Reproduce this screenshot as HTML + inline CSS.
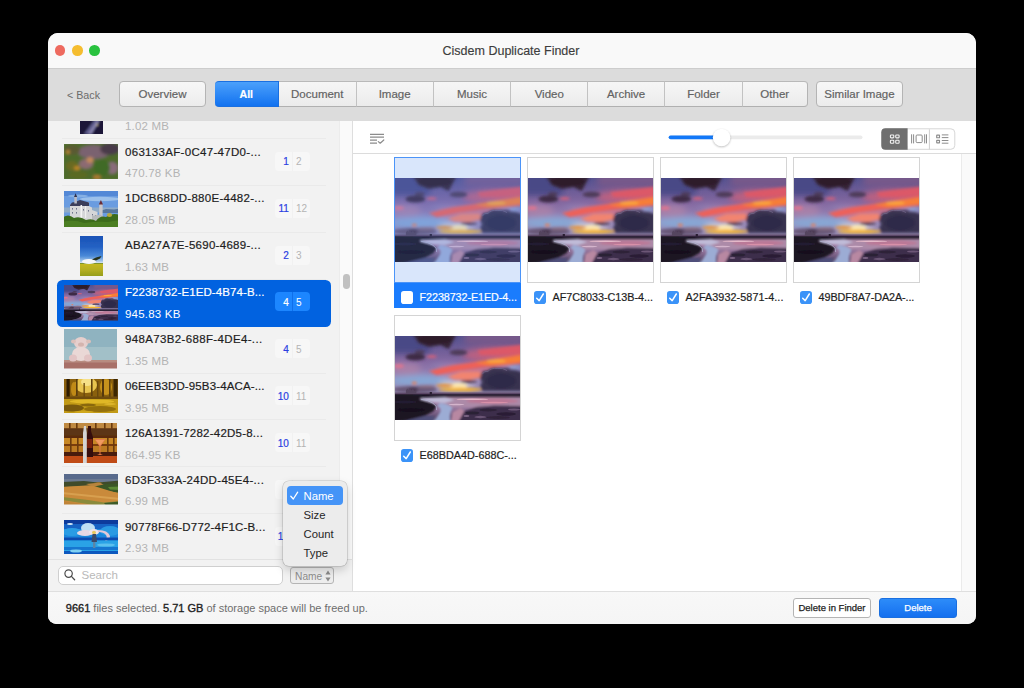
<!DOCTYPE html>
<html>
<head>
<meta charset="utf-8">
<title>Cisdem Duplicate Finder</title>
<style>
*{box-sizing:border-box;margin:0;padding:0}
html,body{width:1024px;height:688px;background:#000;overflow:hidden}
body{font-family:"Liberation Sans",sans-serif;font-size:11px;color:#222;position:relative}
.win{position:absolute;left:48px;top:33px;width:928px;height:590.7px;border-radius:10px 10px 8.5px 8.5px;background:#fff;overflow:hidden}
.abs{position:absolute}
/* title bar */
.tbar{position:absolute;left:0;top:0;width:928px;height:35.6px;background:#f9f9f9;border-bottom:1px solid #cdcdcd}
.tl{position:absolute;top:12.1px;width:10.6px;height:10.6px;border-radius:50%}
.title{-webkit-text-stroke:0.15px;position:absolute;left:0;width:926px;top:11.2px;text-align:center;font-size:12.5px;color:#3d3d3d;line-height:14px}
/* toolbar */
.tool{position:absolute;left:0;top:35.6px;width:928px;height:52.4px;background:#dcdcdc}
.btn{-webkit-text-stroke:0.18px;position:absolute;top:12.6px;height:26px;border:1px solid #b4b4b4;border-radius:4px;background:linear-gradient(#f7f7f7,#ececec);color:#626262;font-size:11.5px;text-align:center;line-height:24px}
.seg{-webkit-text-stroke:0.18px;position:absolute;top:12.6px;height:26px;border-top:1px solid #b9b9b9;border-bottom:1px solid #b0b0b0;border-right:1px solid #c2c2c2;background:linear-gradient(#f6f6f6,#ebebeb);color:#626262;font-size:11.5px;text-align:center;line-height:24px}
/* sidebar */
.side{position:absolute;left:0;top:88px;width:292px;height:470px;background:#f2f2f2;overflow:hidden}
.strack{position:absolute;left:291.4px;top:88px;width:13.6px;height:470px;background:#fafafa;border-left:1px solid #ececec;border-right:1px solid #dedede}
.row{position:absolute;left:0;width:292px;height:47px}
.row .sep{position:absolute;left:14px;width:264px;bottom:-0.6px;height:1px;background:#eaeaea}
.row .nm{position:absolute;left:77px;top:7px;font-size:11.5px;color:#1e1e1e;white-space:nowrap;letter-spacing:0.3px;-webkit-text-stroke:0.2px}
.row .sz{position:absolute;left:77px;top:28.8px;font-size:11.5px;color:#b4b4b4;white-space:nowrap;letter-spacing:0.2px}
.row .th{position:absolute;left:16px;width:54px}
.bdg{position:absolute;left:227.3px;top:13.3px;width:34.8px;height:19px;border-radius:4px;background:#f7f7f7;font-size:10px}
.bdg i{position:absolute;left:16.7px;top:0;width:1px;height:19px;background:#f1f1f1}
.bdg b{position:absolute;left:0;width:13.6px;top:4.6px;text-align:right;color:#2b3fe2;font-weight:normal;font-style:normal;-webkit-text-stroke:0.2px}
.bdg s{position:absolute;left:20.7px;width:14px;top:4.6px;text-align:left;color:#b4b4b4;text-decoration:none}
.row.sel{left:9px;width:274px;background:#0162e0;border-radius:5.5px;margin-top:0.5px}
.row.sel .nm,.row.sel .sz{color:#fff;left:68px;margin-top:-0.6px}
.row.sel .bdg{margin-top:-0.6px}
.row.sel .th{left:7px}
.row.sel .bdg{left:218.3px;background:#1c86ff}
.row.sel .bdg i{background:#0f6fea}
.row.sel .bdg b,.row.sel .bdg s{color:#fff}
/* bottom of sidebar */
.sbot{position:absolute;left:0;top:526px;width:305px;height:32px;background:#f2f2f2;border-top:1px solid #e2e2e2;border-right:1px solid #dedede}
.search{position:absolute;left:9.5px;top:6px;width:225px;height:19px;border:1px solid #cfcfcf;border-radius:5px;background:#fff;color:#b9b9b9;font-size:11.5px;line-height:16px;padding-left:23px}
.pop{position:absolute;left:241.9px;top:6.6px;width:44px;height:17px;border:1px solid #b5b5b5;border-radius:3px;background:#ededed;color:#8c8c8c;font-size:10.2px;line-height:17.5px;padding-left:4.2px}
/* status */
.status{position:absolute;left:0;top:558px;width:928px;height:33px;background:linear-gradient(#f8f8f8,#f5f5f5);border-top:1px solid #dfdfdf}
.status .txt{position:absolute;left:17.8px;top:10.2px;font-size:11px;color:#6e6e6e;white-space:nowrap}
.status .txt b{color:#1e1e1e;font-weight:normal;-webkit-text-stroke:0.35px #1e1e1e}
/* content */
.chead{position:absolute;left:305px;top:88px;width:623px;height:33px;background:#fff;border-bottom:1px solid #dcdcdc}
.cont{position:absolute;left:305px;top:121px;width:609px;height:437px;background:#fff}
.ctrack{position:absolute;left:913px;top:121px;width:15px;height:437px;background:#fafafa;border-left:1px solid #ebebeb}
.tile{position:absolute;width:127px;height:126px;border:1px solid #d4d4d4;background:#fff}
.tile svg{position:absolute;left:0;top:20px;width:125px;height:84px}
.lbl{position:absolute;width:127px;height:25px;font-size:10.8px;color:#1e1e1e;white-space:nowrap;-webkit-text-stroke:0.2px}
.lbl span{position:absolute;left:25.6px;top:8.6px;line-height:12px}
.cb{position:absolute;left:7px;top:8.6px;width:12px;height:12.8px;border-radius:2.8px;background:#3b93f8}
.tile.tsel{background:#d9e6fb;border-color:#4b94f8}
.lbl.lsel{background:#1a7cfd;color:#fff}
.cb.off{background:#fff}
.menu{position:absolute;left:235.1px;top:448px;width:64.2px;height:85px;border-radius:6px;background:#ececec;box-shadow:0 0 0 0.6px rgba(0,0,0,.18),0 4px 10px rgba(0,0,0,.18);font-size:11.3px;color:#262626}
.menu div{position:absolute;left:20.4px;line-height:13px}
</style>
</head>
<body>
<svg width="0" height="0" style="position:absolute;left:0;top:0">
<defs>
<linearGradient id="sky" x1="0" y1="0" x2="0" y2="1">
<stop offset="0" stop-color="#54508e"/><stop offset="0.3" stop-color="#8468a0"/><stop offset="0.52" stop-color="#9c8cbc"/><stop offset="0.68" stop-color="#9084ac"/><stop offset="0.7" stop-color="#261c30"/><stop offset="0.735" stop-color="#261c30"/><stop offset="0.75" stop-color="#ac86ac"/><stop offset="0.88" stop-color="#8e7098"/><stop offset="1" stop-color="#4e3e5e"/>
</linearGradient>
<filter id="bl" x="-20%" y="-20%" width="140%" height="140%"><feGaussianBlur stdDeviation="3"/></filter>
<filter id="bm" x="-20%" y="-20%" width="140%" height="140%"><feGaussianBlur stdDeviation="1.7"/></filter>
<filter id="bt" x="-20%" y="-20%" width="140%" height="140%"><feGaussianBlur stdDeviation="0.45"/></filter>
<filter id="bs" x="-20%" y="-20%" width="140%" height="140%"><feGaussianBlur stdDeviation="0.9"/></filter>
<clipPath id="cp"><rect width="126" height="84"/></clipPath>
<g id="sun" clip-path="url(#cp)">
<rect width="126" height="84" fill="url(#sky)"/>
<g filter="url(#bl)">
<rect x="-5" y="-5" width="40" height="22" fill="#4a4a86"/>
<rect x="70" y="-5" width="60" height="14" fill="#77588a"/>
<ellipse cx="10" cy="33" rx="16" ry="6" fill="#a880a8"/>
<ellipse cx="26" cy="44.5" rx="32" ry="5.5" fill="#86a8d6"/>
<ellipse cx="50" cy="30" rx="14" ry="3" fill="#8a7eb4"/>
<ellipse cx="120" cy="31" rx="8" ry="3" fill="#88aede"/>
<ellipse cx="108" cy="28" rx="10" ry="2" fill="#c29ac2"/>
<ellipse cx="62" cy="49" rx="18" ry="4" fill="#d6cfd8"/>
<ellipse cx="100" cy="19" rx="32" ry="7" fill="#bc6080"/>
<ellipse cx="72" cy="35" rx="30" ry="5" fill="#cc7690"/>
</g>
<g filter="url(#bm)">
<path d="M18 -2H62L58 6L54 13L46 9L34 11L24 7Z" fill="#362434"/>
<ellipse cx="40" cy="3.5" rx="17" ry="5" fill="#2e1e2c"/>
<ellipse cx="20.5" cy="21" rx="10" ry="3.6" fill="#3e2a44"/>
<ellipse cx="25" cy="16" rx="5" ry="2" fill="#4c3a58"/>
<ellipse cx="64" cy="16.5" rx="9" ry="2.8" fill="#4e3a58"/>
<path d="M83 14.5 L100 12 L128 8.5 L128 18 L104 19.5 L86 19Z" fill="#dc5868"/>
<path d="M34 35 L58 29.5 L80 26 L128 18 L128 27.5 L92 31 L64 34.5 L42 39Z" fill="#ee6058"/>
<path d="M80 26.5 L128 19 L128 26 L96 29.5Z" fill="#f67e38"/>
<ellipse cx="102" cy="25" rx="10" ry="1.3" fill="#fbb040"/>
<ellipse cx="37" cy="20.5" rx="5" ry="1.6" fill="#d0607c"/>
<path d="M53 40.5 L66 36 L85 35.5 L88 41 L74 44 L60 43.5Z" fill="#f28470"/>
<ellipse cx="19.5" cy="47" rx="2.6" ry="1.2" fill="#ee7a50"/>
<ellipse cx="4" cy="30" rx="5" ry="2" fill="#dc7490"/>
<ellipse cx="64" cy="50" rx="9" ry="3" fill="#fbe6b0"/>
<ellipse cx="50" cy="49.5" rx="9" ry="1.4" fill="#ea922e"/>
<ellipse cx="66" cy="53.4" rx="22" ry="1.8" fill="#f4b42e"/>
<ellipse cx="20" cy="53.5" rx="22" ry="3.4" fill="#685676"/>
<ellipse cx="32" cy="50.5" rx="9" ry="1.3" fill="#8c7084"/>
<path d="M87 38 Q89 33 93 35 Q97 30 104 32 Q110 31 114 34 Q120 33 128 36 L128 55 L88 55 Q84 50 88 46 Q84 42 87 38Z" fill="#37314f"/>
<ellipse cx="107" cy="45" rx="15" ry="8" fill="#2f2a48"/>
<ellipse cx="74.5" cy="45.5" rx="8.5" ry="1.5" fill="#48344e"/>
<ellipse cx="112" cy="33" rx="4" ry="1.6" fill="#4e4060"/>
<ellipse cx="18" cy="54" rx="5" ry="2.5" fill="#46364e"/>
</g>
<rect x="0" y="56.2" width="126" height="2" fill="#6a5672" opacity="0.55"/>
<g filter="url(#bs)">
<rect x="-2" y="58.4" width="130" height="2.2" fill="#20182a"/>
<rect x="50" y="61.3" width="80" height="10" fill="#ac8aa8"/>
<ellipse cx="98" cy="65" rx="26" ry="2.6" fill="#bc7896"/>
<path d="M22 62.5 L50 61.3 L60 64 L50 67 L36 66Z" fill="#c0bcd8"/>
<path d="M-2 59 L34 59.6 L24 63 L36 66.5 L42 70 L39 75 L30 80 L14 84 L-2 86Z" fill="#1b1424"/>
<path d="M42 69.5 Q48 72 45 77 Q42 82 38 86 L56 86 Q54 78 58 72 Q54 68 46 67Z" fill="#9cacd4"/>
<path d="M56 86 L58 76 L66 72 L70 75 L64 86Z" fill="#b888a2"/>
<path d="M64 86 L70 75 L82 71 L100 69.5 L128 70 L128 86Z" fill="#3e2f4c"/>
<path d="M30 80 L14 84 L10 86 L38 86 L40 80Z" fill="#50507a"/>
</g>
<g filter="url(#bt)">
<path d="M11 58V54.5L12.5 52.5L14 54.5L15 52L16.5 54.5L18 52.8L19.5 55L21.5 54.5V58Z" fill="#54445e"/>
<rect x="35" y="56" width="2.2" height="2.4" fill="#2a1e32"/>
<ellipse cx="78" cy="77" rx="7" ry="1.6" fill="#2c2036"/><ellipse cx="94" cy="74" rx="9" ry="1.4" fill="#2e2238"/><ellipse cx="112" cy="78" rx="10" ry="1.8" fill="#2a1e34"/><ellipse cx="104" cy="81.5" rx="12" ry="1.4" fill="#30243a"/><ellipse cx="86" cy="81" rx="6" ry="1.2" fill="#6a5474"/><ellipse cx="120" cy="73.5" rx="6" ry="1" fill="#6c5676"/><ellipse cx="72" cy="80" rx="3" ry="1" fill="#7c6484"/>
<ellipse cx="78" cy="63.2" rx="16" ry="0.7" fill="#e4b8c8"/><ellipse cx="100" cy="66.5" rx="14" ry="0.7" fill="#d890a8"/><ellipse cx="62" cy="68.5" rx="8" ry="0.7" fill="#d4b4cc"/>
<ellipse cx="10" cy="66" rx="12" ry="1.5" fill="#241a30"/><ellipse cx="16" cy="74" rx="14" ry="2" fill="#15101e"/>
<path d="M26 63.2Q34 64.2 38 67Q43 70 42 74" stroke="#b4b8d4" stroke-width="0.9" fill="none" opacity="0.8"/>
<path d="M88 38Q90 34.5 93.5 35.5Q97 31.5 103 32.5Q109 31.5 113 34.5" stroke="#6e6284" stroke-width="0.9" fill="none"/>

</g>
</g>
</defs>
</svg>
<div class="win">
  <div class="tbar">
    <div class="tl" style="left:6.6px;background:#ee6a5f"></div>
    <div class="tl" style="left:24px;background:#f5bd2f"></div>
    <div class="tl" style="left:41.4px;background:#29c23f"></div>
    <div class="title">Cisdem Duplicate Finder</div>
  </div>
  <div class="tool">
    <div class="abs" style="left:19px;top:20.8px;font-size:10.7px;color:#6b6b6b">&lt; Back</div>
    <div class="btn" style="left:71px;width:87px">Overview</div>
    <div class="seg" style="left:166.6px;width:64.4px;border-radius:4px 0 0 4px;background:linear-gradient(#4ba0fb,#1272f0);border-color:#1a6fe0;color:#fff;font-weight:bold;font-size:10.6px">All</div>
    <div class="seg" style="left:231.0px;width:77.5px">Document</div>
    <div class="seg" style="left:308.5px;width:77.3px">Image</div>
    <div class="seg" style="left:385.8px;width:77.5px">Music</div>
    <div class="seg" style="left:463.3px;width:76.9px">Video</div>
    <div class="seg" style="left:540.2px;width:76.8px">Archive</div>
    <div class="seg" style="left:617.0px;width:78.0px">Folder</div>
    <div class="seg" style="left:695.0px;width:64.5px;border-radius:0 4px 4px 0;border-right:1px solid #b4b4b4">Other</div>
    <div class="btn" style="left:768px;width:87px">Similar Image</div>
  </div>
  <div class="side"><div class="row" style="top:-29.3px;height:46.9px"><svg class="th" style="left:31.7px;top:2.6px;width:23px;height:40px" viewBox="0 0 23 40" preserveAspectRatio="none"><defs><filter id="fnight" x="-10%" y="-10%" width="120%" height="120%"><feGaussianBlur stdDeviation="0.8"/></filter><clipPath id="cnight"><rect width="23" height="40"/></clipPath></defs><g clip-path="url(#cnight)"><g filter="url(#fnight)"><rect x="-2" y="-2" width="27" height="44" fill="#1b1937"/><path d="M4 40L16 24L21 24L12 40Z" fill="#5d5c8c"/><path d="M8 40L17 27L19 27L11 40Z" fill="#8a86b0"/><circle cx="17" cy="31" r="1" fill="#c8b890"/></g></g></svg><div class="nm" style="letter-spacing:0.00px"></div><div class="sz" style="margin-top:-0.8px">1.02 MB</div><div class="sep"></div></div>
<div class="row" style="top:17.6px;height:46.9px"><svg class="th" style="left:16.2px;top:5.6px;width:54px;height:35px" viewBox="0 0 54 35" preserveAspectRatio="none"><defs><filter id="fflower" x="-10%" y="-10%" width="120%" height="120%"><feGaussianBlur stdDeviation="1.6"/></filter><clipPath id="cflower"><rect width="54" height="35"/></clipPath></defs><g clip-path="url(#cflower)"><g filter="url(#fflower)"><rect x="-2" y="-2" width="58" height="39" fill="#4d6a2c"/><ellipse cx="30" cy="8" rx="16" ry="7" fill="#7a6270"/><ellipse cx="46" cy="5" rx="10" ry="6" fill="#4a3a48"/><ellipse cx="8" cy="6" rx="8" ry="5" fill="#5a5a30"/><ellipse cx="22" cy="20" rx="7" ry="5" fill="#8c6a72"/><ellipse cx="48" cy="24" rx="6" ry="6" fill="#8a6c7c"/><ellipse cx="26" cy="16" rx="3.5" ry="3" fill="#c48a5c"/><ellipse cx="8" cy="22" rx="6" ry="5" fill="#6a6a20"/><ellipse cx="13" cy="24" rx="3" ry="2" fill="#c28828"/><ellipse cx="4" cy="8" rx="2" ry="2" fill="#c08a30"/><ellipse cx="38" cy="24" rx="8" ry="8" fill="#3f6a26"/><ellipse cx="14" cy="31" rx="10" ry="4" fill="#5a6a22"/><ellipse cx="33" cy="33" rx="4" ry="2" fill="#b07a30"/></g></g></svg><div class="nm" style="letter-spacing:0.31px">063133AF-0C47-47D0-...</div><div class="sz">470.78 KB</div><div class="bdg"><i></i><b>1</b><s>2</s></div><div class="sep"></div></div>
<div class="row" style="top:64.4px;height:46.9px"><svg class="th" style="left:16.2px;top:5.6px;width:54px;height:36px" viewBox="0 0 54 36" preserveAspectRatio="none"><defs><filter id="fcastle" x="-10%" y="-10%" width="120%" height="120%"><feGaussianBlur stdDeviation="0.45"/></filter><clipPath id="ccastle"><rect width="54" height="36"/></clipPath></defs><g clip-path="url(#ccastle)"><g filter="url(#fcastle)"><rect x="-2" y="-2" width="58" height="40" fill="#6a9ce0"/><rect x="-2" y="-2" width="58" height="7" fill="#5288d6"/><ellipse cx="36" cy="8" rx="20" ry="2.2" fill="#9cc0ea"/><ellipse cx="14" cy="5" rx="10" ry="1.5" fill="#86b0e4"/><rect x="-2" y="16.5" width="58" height="5" fill="#90acc8"/><path d="M36 20L42 18L50 18.5L56 17.5V22H36Z" fill="#56769e"/><path d="M6 33V13.5H11V11H25V15L28 16.5V19L33.5 21V33Z" fill="#d6d6d8"/><path d="M6 14L8 11.5L11 11L16 9L25 11.5V15H6Z" fill="#3a3c5a"/><rect x="10.3" y="5.5" width="2.6" height="7" fill="#b8bac4"/><path d="M10 6L11.6 2.2L13.2 6Z" fill="#2f3150"/><rect x="16.5" y="14" width="1.6" height="14" fill="#f4f4f4"/><rect x="21" y="15" width="1.2" height="12" fill="#efefef"/><g fill="#70748c"><rect x="8" y="17" width="1" height="1.6"/><rect x="12" y="17" width="1" height="1.6"/><rect x="8" y="21" width="1" height="1.6"/><rect x="12" y="21" width="1" height="1.6"/><rect x="19" y="18" width="1" height="1.6"/><rect x="24" y="19" width="1" height="1.6"/><rect x="28" y="23" width="1" height="1.4"/><rect x="31" y="24" width="1" height="1.4"/></g><rect x="35.2" y="13" width="3.4" height="16" fill="#c8c8cc"/><path d="M34.8 13.4L36.9 9L39 13.4Z" fill="#6a2c34"/><path d="M28 25L36 23.5L40 26V34H28Z" fill="#b8babc"/><path d="M-2 27Q4 22 10 27Q16 25 22 29Q28 27 32 30Q36 24 42 26Q48 21 56 24V38H-2Z" fill="#3d6c1c"/><path d="M-2 31Q10 28 20 32Q34 30 44 31L56 29V38H-2Z" fill="#4c7e22"/><ellipse cx="45.5" cy="24" rx="2.6" ry="2" fill="#b8a83c"/></g></g></svg><div class="nm" style="letter-spacing:0.28px">1DCB68DD-880E-4482-...</div><div class="sz">28.05 MB</div><div class="bdg"><i></i><b>11</b><s>12</s></div><div class="sep"></div></div>
<div class="row" style="top:111.3px;height:46.9px"><svg class="th" style="left:31.7px;top:3.3px;width:23px;height:40px" viewBox="0 0 23 40" preserveAspectRatio="none"><defs><filter id="frape" x="-10%" y="-10%" width="120%" height="120%"><feGaussianBlur stdDeviation="0.5"/></filter><clipPath id="crape"><rect width="23" height="40"/></clipPath></defs><g clip-path="url(#crape)"><g filter="url(#frape)"><defs><linearGradient id="rg" x1="0" y1="0" x2="0" y2="1"><stop offset="0" stop-color="#184fb4"/><stop offset="0.3" stop-color="#2462c4"/><stop offset="0.5" stop-color="#4a8ad8"/><stop offset="0.62" stop-color="#a8c8ea"/><stop offset="0.66" stop-color="#dfe8f2"/><stop offset="0.665" stop-color="#6a8a30"/><stop offset="0.69" stop-color="#c4b824"/><stop offset="0.82" stop-color="#b4ae20"/><stop offset="1" stop-color="#8c981c"/></linearGradient></defs><rect x="-2" y="-2" width="27" height="44" fill="url(#rg)"/><ellipse cx="9" cy="25.5" rx="7" ry="2.5" fill="#f4f6f8"/><path d="M12 23.5L16 21.5L21.5 20L20 22.5L16 24.5Z" fill="#26301c"/></g></g></svg><div class="nm" style="letter-spacing:0.28px">ABA27A7E-5690-4689-...</div><div class="sz">1.63 MB</div><div class="bdg"><i></i><b>2</b><s>3</s></div><div class="sep"></div></div>
<div class="row sel" style="top:158.2px;height:46.9px"><svg class="th" style="left:7.2px;top:5.8px;width:54px;height:35.5px" viewBox="0 0 126 84" preserveAspectRatio="none"><use href="#sun"/></svg><div class="nm" style="letter-spacing:0.09px">F2238732-E1ED-4B74-B...</div><div class="sz">945.83 KB</div><div class="bdg"><i></i><b>4</b><s>5</s></div></div>
<div class="row" style="top:205.1px;height:46.9px"><svg class="th" style="left:16.2px;top:3.3px;width:53px;height:39.5px" viewBox="0 0 53 39.5" preserveAspectRatio="none"><defs><filter id="fteddy" x="-10%" y="-10%" width="120%" height="120%"><feGaussianBlur stdDeviation="0.6"/></filter><clipPath id="cteddy"><rect width="53" height="39.5"/></clipPath></defs><g clip-path="url(#cteddy)"><g filter="url(#fteddy)"><rect x="-2" y="-2" width="58" height="44" fill="#8fb3c0"/><rect x="-2" y="18" width="58" height="14" fill="#a2c0c8"/><rect x="-2" y="31" width="58" height="3" fill="#b88c80"/><rect x="-2" y="33.5" width="58" height="8" fill="#a87068"/><ellipse cx="17" cy="14" rx="7" ry="6" fill="#e6cfcd"/><ellipse cx="17" cy="25" rx="9" ry="7" fill="#ead8d6"/><ellipse cx="9" cy="29" rx="4" ry="3.6" fill="#e2c4c4"/><ellipse cx="24" cy="29" rx="4" ry="3.6" fill="#e2c4c4"/><ellipse cx="9.5" cy="12.5" rx="2.5" ry="2" fill="#dcc0ba"/><ellipse cx="24.5" cy="12.5" rx="2.5" ry="2" fill="#dcc0ba"/><ellipse cx="17" cy="15.5" rx="3" ry="2" fill="#d4b4ae"/></g></g></svg><div class="nm" style="letter-spacing:0.35px">948A73B2-688F-4DE4-...</div><div class="sz">1.35 MB</div><div class="bdg"><i></i><b>4</b><s>5</s></div><div class="sep"></div></div>
<div class="row" style="top:251.9px;height:46.9px"><svg class="th" style="left:16.2px;top:5.7px;width:54px;height:34px" viewBox="0 0 54 34" preserveAspectRatio="none"><defs><filter id="fforest" x="-10%" y="-10%" width="120%" height="120%"><feGaussianBlur stdDeviation="0.7"/></filter><clipPath id="cforest"><rect width="54" height="34"/></clipPath></defs><g clip-path="url(#cforest)"><g filter="url(#fforest)"><rect x="-2" y="-2" width="58" height="38" fill="#a87a10"/><rect x="-2" y="-2" width="58" height="21" fill="#8a600c"/><ellipse cx="22" cy="6" rx="11" ry="8" fill="#e8c450"/><ellipse cx="23" cy="3" rx="6" ry="4" fill="#f6e088"/><ellipse cx="42" cy="8" rx="6" ry="8" fill="#c8921a"/><ellipse cx="10" cy="10" rx="3" ry="7" fill="#c08a18"/><rect x="2.5" y="-2" width="3.2" height="22" fill="#2e1c04"/><rect x="12" y="-2" width="1.6" height="19" fill="#5a3c08"/><rect x="19.5" y="4" width="1.3" height="14" fill="#6a480a"/><rect x="27" y="-2" width="1.6" height="19" fill="#5e4008"/><rect x="33" y="2" width="1.4" height="16" fill="#6a480a"/><rect x="38" y="-2" width="2" height="20" fill="#553808"/><rect x="45" y="-2" width="1.6" height="20" fill="#5e4008"/><rect x="49.5" y="-2" width="4" height="21" fill="#3a2606"/><rect x="-2" y="17.5" width="58" height="3" fill="#6e4c08"/><rect x="-2" y="20" width="58" height="16" fill="#c29a16"/><ellipse cx="28" cy="22.5" rx="22" ry="2" fill="#e0b828"/><ellipse cx="8" cy="29" rx="12" ry="3.5" fill="#7a5a0a"/><ellipse cx="36" cy="30" rx="16" ry="3" fill="#94700e"/><ellipse cx="24" cy="26" rx="8" ry="1.4" fill="#8a680c"/><ellipse cx="46" cy="25" rx="6" ry="1.2" fill="#dcb42a"/><ellipse cx="20" cy="33" rx="10" ry="1.2" fill="#d0a81e"/></g></g></svg><div class="nm" style="letter-spacing:0.13px">06EEB3DD-95B3-4ACA-...</div><div class="sz">3.95 MB</div><div class="bdg"><i></i><b>10</b><s>11</s></div><div class="sep"></div></div>
<div class="row" style="top:298.8px;height:46.9px"><svg class="th" style="left:16.2px;top:3.5px;width:53px;height:40px" viewBox="0 0 53 40" preserveAspectRatio="none"><defs><filter id="fbar" x="-10%" y="-10%" width="120%" height="120%"><feGaussianBlur stdDeviation="0.7"/></filter><clipPath id="cbar"><rect width="53" height="40"/></clipPath></defs><g clip-path="url(#cbar)"><g filter="url(#fbar)"><rect x="-2" y="-2" width="58" height="44" fill="#5a2c0c"/><rect x="-2" y="-2" width="58" height="7.5" fill="#c08a42"/><rect x="-2" y="5.5" width="58" height="7" fill="#5c3412"/><rect x="-2" y="15" width="58" height="6" fill="#c88828"/><rect x="-2" y="21" width="58" height="3" fill="#7a3c10"/><rect x="-2" y="23" width="58" height="6" fill="#bc7a24"/><rect x="-2" y="29" width="58" height="4.5" fill="#481a08"/><rect x="-2" y="33" width="58" height="9" fill="#c04c14"/><g fill="#6a3a10"><rect x="5" y="-2" width="1.6" height="8"/><rect x="12" y="-2" width="1.6" height="8"/><rect x="31" y="-2" width="1.6" height="8"/><rect x="40" y="-2" width="1.6" height="8"/><rect x="47" y="-2" width="1.6" height="8"/><rect x="6" y="15" width="1.6" height="14"/><rect x="13" y="15" width="1.6" height="14"/><rect x="43" y="15" width="1.6" height="14"/><rect x="49" y="15" width="1.6" height="14"/></g><path d="M22.5 34V14L24 8V3H27V8L29 14V34Z" fill="#34100a"/><rect x="23" y="16" width="5.5" height="9" fill="#7a2410"/><path d="M19 40V10L20 3H22L22.8 10V40Z" fill="#d4d4d4"/><path d="M30.5 16H41.5L36.5 23.5V31L39 32H33L35.5 31V23.5Z" fill="#e07848"/><path d="M31.5 17H40.5L36 22.5Z" fill="#f09a60"/></g></g></svg><div class="nm" style="letter-spacing:0.22px">126A1391-7282-42D5-8...</div><div class="sz">864.95 KB</div><div class="bdg"><i></i><b>10</b><s>11</s></div><div class="sep"></div></div>
<div class="row" style="top:345.7px;height:46.9px"><svg class="th" style="left:16.2px;top:7.5px;width:54px;height:30.5px" viewBox="0 0 54 30.5" preserveAspectRatio="none"><defs><filter id="ffield" x="-10%" y="-10%" width="120%" height="120%"><feGaussianBlur stdDeviation="0.6"/></filter><clipPath id="cfield"><rect width="54" height="30.5"/></clipPath></defs><g clip-path="url(#cfield)"><g filter="url(#ffield)"><rect x="-2" y="-2" width="58" height="36" fill="#c98c3c"/><rect x="-2" y="-2" width="58" height="9.6" fill="#596a8c"/><rect x="-2" y="5" width="58" height="3" fill="#6c7a92"/><path d="M-2 8L20 7L34 8.5L56 6.5V12L30 11L-2 13Z" fill="#3f4c2c"/><path d="M22 10L36 8.5L40 11L30 13Z" fill="#b8843c"/><path d="M28 13L42 10L56 9.5V19L44 17Z" fill="#3a5628"/><path d="M44 13L56 12.5V16L46 15.5Z" fill="#5c8a34"/><path d="M-2 13L30 12L56 20V34H-2Z" fill="#c98a3a"/><path d="M-2 18L56 24V26L-2 20Z" fill="#d8a050"/><path d="M-2 23L24 26L40 28.5L56 27V34L30 31L-2 26Z" fill="#8a8a3a"/><path d="M-2 27L30 31.5L56 34H-2Z" fill="#c08438"/><path d="M40 29L56 27.5V34H44Z" fill="#3c5a28"/></g></g></svg><div class="nm" style="letter-spacing:0.31px">6D3F333A-24DD-45E4-...</div><div class="sz">6.99 MB</div><div class="bdg"><i></i><b>4</b><s>5</s></div><div class="sep"></div></div>
<div class="row" style="top:392.5px;height:46.9px"><svg class="th" style="left:16.2px;top:6.1px;width:54px;height:34px" viewBox="0 0 54 34" preserveAspectRatio="none"><defs><filter id="fanime" x="-10%" y="-10%" width="120%" height="120%"><feGaussianBlur stdDeviation="0.6"/></filter><clipPath id="canime"><rect width="54" height="34"/></clipPath></defs><g clip-path="url(#canime)"><g filter="url(#fanime)"><rect x="-2" y="-2" width="58" height="38" fill="#1a86dc"/><rect x="-2" y="-2" width="58" height="7" fill="#0c3a9c"/><rect x="-2" y="4" width="58" height="5" fill="#1462c4"/><ellipse cx="8" cy="12" rx="10" ry="4" fill="#2c9ce4"/><ellipse cx="46" cy="11" rx="10" ry="5" fill="#2a9ae2"/><ellipse cx="24" cy="8" rx="7" ry="5" fill="#bfe0f4"/><ellipse cx="21" cy="13" rx="8" ry="3" fill="#e8d8e4"/><ellipse cx="30" cy="12" rx="5" ry="3" fill="#f0e4ea"/><ellipse cx="6" cy="4" rx="3" ry="1" fill="#d8ecf8"/><path d="M34 10Q44 10 46 16Q46 20 40 22Q44 18 42 15Q40 12 34 12Z" fill="#e4c8d8"/><rect x="-2" y="17.5" width="58" height="3" fill="#0d4cb0"/><rect x="-2" y="20.5" width="58" height="15" fill="#2aa2e6"/><rect x="-2" y="27" width="58" height="3" fill="#1676d0"/><rect x="-2" y="31" width="58" height="5" fill="#0c58be"/><ellipse cx="12" cy="31" rx="6" ry="1.6" fill="#7fd0f2"/><ellipse cx="42" cy="25" rx="9" ry="1.6" fill="#5cc0ee"/><ellipse cx="30" cy="12.6" rx="2" ry="1.8" fill="#e8c860"/><path d="M28.5 14H32L33 22H27.5Z" fill="#3a4a6a"/><rect x="29" y="22" width="2.4" height="6" fill="#5a86a8"/></g></g></svg><div class="nm" style="letter-spacing:0.19px">90778F66-D772-4F1C-B...</div><div class="sz">2.93 MB</div><div class="bdg"><i></i><b>10</b><s>11</s></div><div class="sep"></div></div></div>
  <div class="strack"><div class="abs" style="left:2.7px;top:152.8px;width:6.7px;height:15px;border-radius:3.4px;background:#c1c1c1"></div></div>
  <div class="chead">
<svg class="abs" style="left:0;top:0" width="623" height="33" viewBox="353 121 623 33">
<g stroke="#8c8c8c" stroke-width="1.2" fill="none">
<path d="M370 134.3H384M370 137.2H384M370 140.2H377M370 143.1H377"/>
<path d="M378.3 141.6L380.2 143.2L383.8 140" stroke-linecap="round" stroke-linejoin="round"/>
</g>
<rect x="668.5" y="135.4" width="194" height="3.8" rx="1.9" fill="#ebebeb"/>
<rect x="668.7" y="135.4" width="54" height="3.8" rx="1.9" fill="#1278f8"/>
<defs><filter id="ts" x="-30%" y="-30%" width="160%" height="170%"><feGaussianBlur stdDeviation="0.8"/></filter></defs>
<circle cx="721.6" cy="138.4" r="8.7" fill="#000" opacity="0.28" filter="url(#ts)"/>
<circle cx="721.6" cy="137.5" r="8.8" fill="#fff"/>
<rect x="881.8" y="128.8" width="73" height="20.5" rx="4" fill="#fff" stroke="#d6d6d6" stroke-width="1"/>
<path d="M885.3 128.3H907.6V149.8H885.3a4 4 0 0 1 -4-4V132.3a4 4 0 0 1 4-4Z" fill="#6f6f6f"/>
<path d="M929.4 129.3V149.3" stroke="#cfcfcf" stroke-width="1"/>
<g fill="none" stroke="#f2f2f2" stroke-width="1.1">
<rect x="890.4" y="135" width="3.4" height="2.9" rx="0.8"/><rect x="895.7" y="135" width="3.4" height="2.9" rx="0.8"/>
<rect x="890.4" y="140.3" width="3.4" height="2.9" rx="0.8"/><rect x="895.7" y="140.3" width="3.4" height="2.9" rx="0.8"/>
</g>
<g fill="none" stroke="#8c8c8c" stroke-width="1">
<path d="M911.6 134.3V143.4M913.6 134.3V143.4M924.7 134.3V143.4M926.5 134.3V143.4"/>
<rect x="916.1" y="135" width="6.1" height="7.6" rx="1"/>
<rect x="936.7" y="135.1" width="2.8" height="2.6" rx="0.3" stroke-width="1.15"/><rect x="936.7" y="140.3" width="2.8" height="2.6" rx="0.3" stroke-width="1.15"/>
<path d="M941.8 134.9H948.4M941.8 137.6H948.4M941.8 140.5H948.4M941.8 143.2H948.4"/>
</g>
</svg>
</div>
  <div class="cont"><div class="tile tsel" style="left:41.0px;top:3.3px"><svg viewBox="0 0 126 84" preserveAspectRatio="none"><use href="#sun"/><rect width="126" height="84" fill="#5a96ff" opacity="0.16"/></svg></div>
<div class="lbl lsel" style="left:41.0px;top:128.5px"><div class="cb off"></div><span style="letter-spacing:-0.10px">F2238732-E1ED-4...</span></div>
<div class="tile" style="left:174.0px;top:3.3px"><svg viewBox="0 0 126 84" preserveAspectRatio="none"><use href="#sun"/></svg></div>
<div class="lbl" style="left:174.0px;top:128.5px"><div class="cb"><svg viewBox="0 0 12 12.8" width="12" height="12.8" style="position:absolute;left:0;top:0"><path d="M2.7 7.3 L5.2 9.6 L9.3 3" fill="none" stroke="#fff" stroke-width="1.5" stroke-linecap="round" stroke-linejoin="round"/></svg></div><span style="letter-spacing:-0.03px">AF7C8033-C13B-4...</span></div>
<div class="tile" style="left:307.0px;top:3.3px"><svg viewBox="0 0 126 84" preserveAspectRatio="none"><use href="#sun"/></svg></div>
<div class="lbl" style="left:307.0px;top:128.5px"><div class="cb"><svg viewBox="0 0 12 12.8" width="12" height="12.8" style="position:absolute;left:0;top:0"><path d="M2.7 7.3 L5.2 9.6 L9.3 3" fill="none" stroke="#fff" stroke-width="1.5" stroke-linecap="round" stroke-linejoin="round"/></svg></div><span style="letter-spacing:0.07px">A2FA3932-5871-4...</span></div>
<div class="tile" style="left:440.0px;top:3.3px"><svg viewBox="0 0 126 84" preserveAspectRatio="none"><use href="#sun"/></svg></div>
<div class="lbl" style="left:440.0px;top:128.5px"><div class="cb"><svg viewBox="0 0 12 12.8" width="12" height="12.8" style="position:absolute;left:0;top:0"><path d="M2.7 7.3 L5.2 9.6 L9.3 3" fill="none" stroke="#fff" stroke-width="1.5" stroke-linecap="round" stroke-linejoin="round"/></svg></div><span style="letter-spacing:-0.09px">49BDF8A7-DA2A-...</span></div>
<div class="tile" style="left:41.0px;top:161.2px"><svg viewBox="0 0 126 84" preserveAspectRatio="none"><use href="#sun"/></svg></div>
<div class="lbl" style="left:41.0px;top:286.4px"><div class="cb"><svg viewBox="0 0 12 12.8" width="12" height="12.8" style="position:absolute;left:0;top:0"><path d="M2.7 7.3 L5.2 9.6 L9.3 3" fill="none" stroke="#fff" stroke-width="1.5" stroke-linecap="round" stroke-linejoin="round"/></svg></div><span style="letter-spacing:0.00px">E68BDA4D-688C-...</span></div></div>
  <div class="ctrack"></div>
  <div class="sbot">
    <div class="search"><svg class="abs" style="left:4.2px;top:1.2px" width="14" height="14" viewBox="0 0 14 14"><circle cx="5.6" cy="5.6" r="3.7" fill="none" stroke="#4c4c4c" stroke-width="1.2"/><path d="M8.4 8.4L11.6 11.7" stroke="#4c4c4c" stroke-width="1.3" stroke-linecap="round"/></svg>Search</div>
    <div class="pop">Name<svg class="abs" style="left:33px;top:1.4px" width="8" height="14" viewBox="0 0 8 14"><path d="M1.4 5.6L4 1.6L6.6 5.6ZM1.4 8.6L4 12.6L6.6 8.6Z" fill="#8a8a8a"/></svg></div>
  </div>
  <div class="status">
    <div class="txt"><b>9661</b> files selected. <b>5.71 GB</b> of storage space will be freed up.</div>
    <div class="btn" style="left:745.2px;top:6px;width:77.6px;height:20.4px;line-height:18.6px;font-size:9.5px;-webkit-text-stroke:0.25px #222;background:#fff;color:#222;border-radius:3px">Delete in Finder</div>
    <div class="btn" style="left:831px;top:6px;width:78px;height:20.4px;line-height:18.6px;font-size:9.5px;-webkit-text-stroke:0.25px #fff;background:linear-gradient(#2d8cf9,#1570ef);color:#fff;border-color:#1a6fe0;border-radius:3px">Delete</div>
  </div>
  <div class="menu">
    <div style="left:4.3px;top:4.7px;width:55.5px;height:18.9px;border-radius:4px;background:#4594f7"></div>
    <svg class="abs" style="left:0;top:0" width="64" height="85" viewBox="283.1 481 64 85"><path d="M290.9 496.2L293.4 499L297.8 492.2" fill="none" stroke="#fff" stroke-width="1.3" stroke-linecap="round" stroke-linejoin="round"/></svg>
    <div style="top:8.8px;color:#fff">Name</div>
    <div style="top:28.1px">Size</div>
    <div style="top:47.3px">Count</div>
    <div style="top:66.1px">Type</div>
  </div>
</div>
</div>
</body>
</html>
